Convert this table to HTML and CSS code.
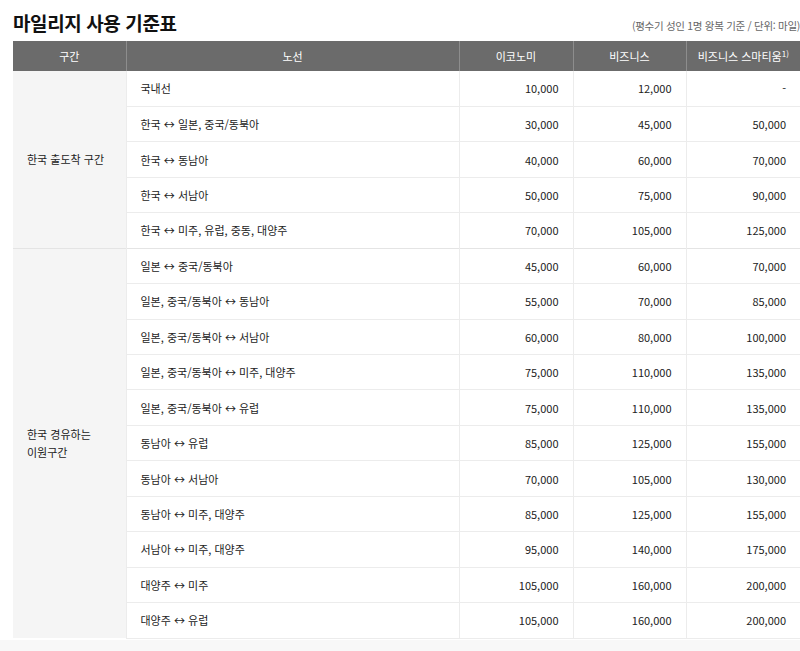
FILE: index.html
```html
<!DOCTYPE html>
<html lang="ko">
<head>
<meta charset="utf-8">
<link rel="stylesheet" href="styles.css">
</head>
<body>
<div class="page">
  <div class="head">
    <h1 class="title">마일리지 사용 기준표</h1>
    <span class="note">(평수기 성인 1명 왕복 기준 / 단위: 마일)</span>
  </div>
  <table class="miles">
    <colgroup>
      <col class="c1"><col class="c2"><col class="c3"><col class="c4"><col class="c5">
    </colgroup>
    <thead>
      <tr><th>구간</th><th>노선</th><th>이코노미</th><th>비즈니스</th><th>비즈니스 스마티움<sup>1)</sup></th></tr>
    </thead>
    <tbody>
      <tr><td class="grp" rowspan="5">한국 출도착 구간</td><td class="route">국내선</td><td>10,000</td><td>12,000</td><td>-</td></tr>
      <tr><td class="route">한국 ↔ 일본, 중국/동북아</td><td>30,000</td><td>45,000</td><td>50,000</td></tr>
      <tr><td class="route">한국 ↔ 동남아</td><td>40,000</td><td>60,000</td><td>70,000</td></tr>
      <tr><td class="route">한국 ↔ 서남아</td><td>50,000</td><td>75,000</td><td>90,000</td></tr>
      <tr class="last"><td class="route">한국 ↔ 미주, 유럽, 중동, 대양주</td><td>70,000</td><td>105,000</td><td>125,000</td></tr>
      <tr><td class="grp" rowspan="11">한국 경유하는<br>이원구간</td><td class="route">일본 ↔ 중국/동북아</td><td>45,000</td><td>60,000</td><td>70,000</td></tr>
      <tr><td class="route">일본, 중국/동북아 ↔ 동남아</td><td>55,000</td><td>70,000</td><td>85,000</td></tr>
      <tr><td class="route">일본, 중국/동북아 ↔ 서남아</td><td>60,000</td><td>80,000</td><td>100,000</td></tr>
      <tr><td class="route">일본, 중국/동북아 ↔ 미주, 대양주</td><td>75,000</td><td>110,000</td><td>135,000</td></tr>
      <tr><td class="route">일본, 중국/동북아 ↔ 유럽</td><td>75,000</td><td>110,000</td><td>135,000</td></tr>
      <tr><td class="route">동남아 ↔ 유럽</td><td>85,000</td><td>125,000</td><td>155,000</td></tr>
      <tr><td class="route">동남아 ↔ 서남아</td><td>70,000</td><td>105,000</td><td>130,000</td></tr>
      <tr><td class="route">동남아 ↔ 미주, 대양주</td><td>85,000</td><td>125,000</td><td>155,000</td></tr>
      <tr><td class="route">서남아 ↔ 미주, 대양주</td><td>95,000</td><td>140,000</td><td>175,000</td></tr>
      <tr><td class="route">대양주 ↔ 미주</td><td>105,000</td><td>160,000</td><td>200,000</td></tr>
      <tr><td class="route">대양주 ↔ 유럽</td><td>105,000</td><td>160,000</td><td>200,000</td></tr>
    </tbody>
  </table>
  <div class="foot"></div>
</div>
</body>
</html>
```
FILE: styles.css
```css
html, body {
  margin: 0;
  padding: 0;
  background: #fff;
}
body {
  font-family: "Noto Sans CJK KR", "Noto Sans", sans-serif;
  color: #222;
}
.page {
  width: 800px;
}
.head {
  display: flex;
  justify-content: space-between;
  align-items: flex-end;
  padding: 6px 0 0 13px;
  height: 35px;
  box-sizing: border-box;
}
.title {
  margin: 0;
  font-size: 19px;
  font-weight: 700;
  line-height: 24px;
  color: #111;
  letter-spacing: -0.4px;
}
.note {
  font-size: 10.5px;
  color: #666;
  line-height: 14px;
  padding-bottom: 2px;
  letter-spacing: -0.3px;
}
.miles {
  margin: 6px 0 0 13px;
  width: 787px;
  border-collapse: collapse;
  table-layout: fixed;
  font-size: 11px;
}
.c1 { width: 113px; }
.c2 { width: 333px; }
.c3 { width: 114px; }
.c4 { width: 113px; }
.c5 { width: 114px; }
.miles th {
  background: #6b6b6b;
  color: #fff;
  font-weight: 400;
  height: 30px;
  padding: 0;
  border-left: 1px solid #8d8d8d;
  text-align: center;
  font-size: 11px;
}
.miles th:first-child { border-left: none; }
.miles th sup {
  font-size: 8px;
  line-height: 0;
  vertical-align: 4px;
}
.miles td {
  height: 35.45px;
  padding: 0 14px;
  border-top: 1px solid #ececec;
  border-left: 1px solid #ececec;
  text-align: right;
  color: #222;
  box-sizing: border-box;
}
.miles tbody tr:first-child td { border-top: none; }
.miles td.route { text-align: left; }
.miles td.grp {
  background: #f5f5f5;
  text-align: left;
  border-left: none;
  line-height: 18px;
}
.miles tr.last + tr td { border-top: 1px solid #e4e4e4; }
.miles tbody tr:last-child td { border-bottom: 1px solid #ececec; }
.foot {
  height: 14px;
  margin-top: 1px;
  background: #f8f8f8;
}
```
